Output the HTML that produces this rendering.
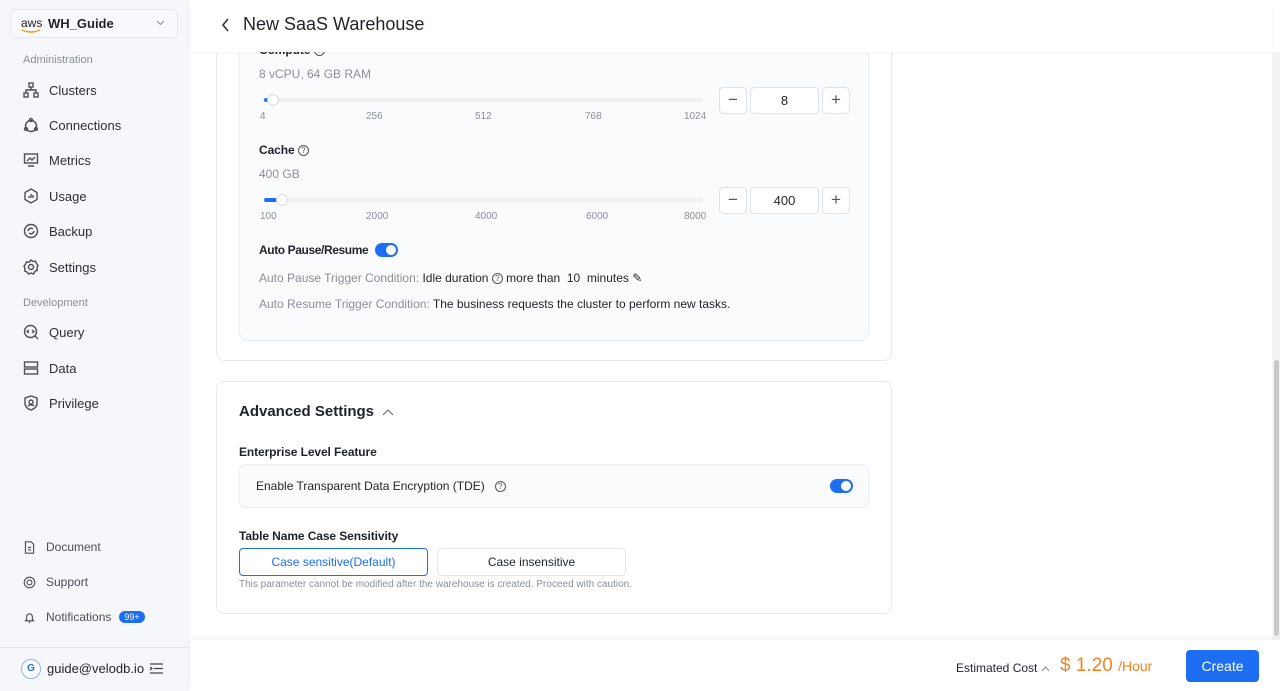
<!DOCTYPE html>
<html><head><meta charset="utf-8"><style>
*{box-sizing:border-box;margin:0;padding:0}
body{width:1280px;height:691px;overflow:hidden;font-family:"Liberation Sans",sans-serif;background:#fff;position:relative;color:#1f2329}
.side{position:absolute;left:0;top:0;width:190px;height:691px;background:#f6f7fb}
.ws{position:absolute;left:10px;top:9px;width:168px;height:29px;border:1px solid #e6e8ef;border-radius:5px;background:#f8f9fc}
.ws .aws{position:absolute;left:10px;top:6px;font-size:12px;color:#222}
.ws .n{position:absolute;left:37px;top:6px;font-size:13px;font-weight:bold;color:#1f2329}
.sec{position:absolute;left:23px;font-size:11px;color:#8a8f99}
.it{position:absolute;left:23px;font-size:13px;color:#2b2f36;display:flex;align-items:center}
.it svg{width:16px;height:16px;margin-right:10px;stroke:#4a4f58;fill:none;stroke-width:1.4}
.bt{position:absolute;left:23px;font-size:12px;color:#4a4f58;display:flex;align-items:center}
.bt svg{width:13px;height:13px;margin-right:10px;stroke:#4a4f58;fill:none;stroke-width:1.4}
.badge{background:#1e6ef4;color:#fff;font-size:9px;border-radius:8px;padding:1px 5px;margin-left:8px}
.hdr{position:absolute;left:190px;top:0;width:1082px;height:52px;background:#fff;box-shadow:0 1px 2px rgba(0,0,0,.04)}
.hdr .t{position:absolute;left:53px;top:14px;font-size:18px;color:#1f2329}
.card{position:absolute;left:216px;width:676px;border:1px solid #e8eaee;border-radius:8px;background:#fff}
.inner{position:absolute;left:239px;top:40px;width:630px;height:301px;border:1px solid #eceef2;border-top:none;border-radius:0 0 8px 8px;background:#fafbfd}
.abs{position:absolute}
.gray{color:#8a8f99}
.track{position:absolute;height:4px;background:#eef0f4;border-radius:2px}
.knob{position:absolute;width:12px;height:12px;border-radius:50%;background:#fff;border:1px solid #d9dce3;top:-4px}
.tick{position:absolute;font-size:10px;color:#8a8f99}
.btn{position:absolute;width:28px;height:27px;border:1px solid #dfe2e8;border-radius:4px;background:#fff;text-align:center;line-height:24px;font-size:17px;color:#555}
.inp{position:absolute;width:69px;height:27px;border:1px solid #dfe2e8;border-radius:4px;background:#fff;text-align:center;line-height:26px;font-size:13px}
.tg{position:absolute;width:23px;height:14px;border-radius:7px;background:#1e6ef4}
.tg:after{content:"";position:absolute;right:2px;top:2px;width:10px;height:10px;border-radius:50%;background:#fff}
.q{display:inline-block;width:11px;height:11px;border:1px solid #555;border-radius:50%;font-size:8px;text-align:center;line-height:10px;vertical-align:1px;color:#555;font-weight:normal}
.foot{position:absolute;left:190px;top:640px;width:1090px;height:51px;background:#fff;box-shadow:0 -2px 6px rgba(0,0,0,.04)}
.m{font-weight:bold;font-size:12px;letter-spacing:-0.1px}
</style></head><body>
<div class="side">
<div class="ws"><span class="aws">aws</span><svg style="position:absolute;left:10px;top:19px" width="20" height="5"><path d="M1 1 Q10 5 19 1" stroke="#f90" stroke-width="1.5" fill="none"/></svg><span class="n">WH_Guide</span><svg style="position:absolute;right:12px;top:10px" width="9" height="6"><path d="M1 1l3.5 3.5L8 1" stroke="#888" fill="none"/></svg></div>
<div class="sec" style="top:54px">Administration</div>
<div class="it" style="top:82px"><svg viewBox="0 0 16 16"><rect x="6" y="1" width="4" height="4"/><rect x="1" y="11" width="4" height="4"/><rect x="11" y="11" width="4" height="4"/><path d="M8 5v3M3 11V8h10v3"/></svg>Clusters</div>
<div class="it" style="top:117px"><svg viewBox="0 0 16 16"><circle cx="8" cy="9" r="5.5"/><circle cx="8" cy="3" r="1.5"/><circle cx="3" cy="12" r="1.5"/><circle cx="13" cy="12" r="1.5"/></svg>Connections</div>
<div class="it" style="top:152px"><svg viewBox="0 0 16 16"><rect x="1.5" y="2" width="13" height="9"/><path d="M4 9l3-3 2 2 3-3M5 14h6"/></svg>Metrics</div>
<div class="it" style="top:188px"><svg viewBox="0 0 16 16"><path d="M8 1l6 3.5v7L8 15l-6-3.5v-7z M6 10V8M8 10V6M10 10V7"/></svg>Usage</div>
<div class="it" style="top:223px"><svg viewBox="0 0 16 16"><circle cx="8" cy="8" r="6.5"/><path d="M5 8a3 3 0 0 1 5-2M11 8a3 3 0 0 1-5 2"/></svg>Backup</div>
<div class="it" style="top:259px"><svg viewBox="0 0 16 16"><path d="M8 1l2 1.5 2.5-.3 1 2.3 1.5 2-1 2.3.3 2.5-2.3 1L10.5 15 8 14l-2.5 1-1.5-2-2.3-1 .3-2.5-1-2.3 1.5-2 1-2.3 2.5.3z"/><circle cx="8" cy="8" r="2.5"/></svg>Settings</div>
<div class="sec" style="top:297px">Development</div>
<div class="it" style="top:324px"><svg viewBox="0 0 16 16"><circle cx="7.5" cy="7.5" r="6"/><path d="M12 12l3 3M6 6l-2 1.5L6 9M9 6l2 1.5L9 9"/></svg>Query</div>
<div class="it" style="top:360px"><svg viewBox="0 0 16 16"><rect x="1.5" y="2" width="13" height="5"/><rect x="1.5" y="9" width="13" height="5"/></svg>Data</div>
<div class="it" style="top:395px"><svg viewBox="0 0 16 16"><path d="M8 1l6 2v5c0 4-3 6-6 7-3-1-6-3-6-7V3z"/><circle cx="8" cy="7" r="2"/><path d="M5 11c1-1.5 5-1.5 6 0"/></svg>Privilege</div>
<div class="bt" style="top:540px"><svg viewBox="0 0 16 16"><path d="M3 1h7l3 3v11H3z M6 8h4M6 11h4"/></svg>Document</div>
<div class="bt" style="top:575px"><svg viewBox="0 0 16 16"><circle cx="8" cy="8" r="6.5"/><circle cx="8" cy="8" r="3"/></svg>Support</div>
<div class="bt" style="top:610px"><svg viewBox="0 0 16 16"><path d="M3 12h10l-1.5-2V7a3.5 3.5 0 0 0-7 0v3zM7 14h2"/></svg>Notifications<span class="badge">99+</span></div>
<div style="position:absolute;left:0;top:647px;width:190px;border-top:1px solid #e4e6ec"></div>
<div style="position:absolute;left:21px;top:659px;width:20px;height:20px;border:1px solid #8fb3f7;border-radius:50%;background:#fff;font-size:10px;color:#1e6ef4;text-align:center;line-height:18px;font-weight:bold">G</div>
<div style="position:absolute;left:47px;top:661px;font-size:13px;color:#1f2329">guide@velodb.io</div>
<svg style="position:absolute;left:150px;top:663px" width="13" height="11"><path d="M0 1h13M4 5.5h9M0 10h13M0 4l2 1.5L0 7" stroke="#444" stroke-width="1.3" fill="none"/></svg>
</div>

<div class="card" style="top:20px;height:341px;border-top:none;border-radius:0 0 8px 8px"></div>
<div class="inner"></div>
<div class="abs m" style="left:259px;top:43px">Compute <span class="q">?</span></div>
<div class="abs gray" style="left:259px;top:67px;font-size:12px">8 vCPU, 64 GB RAM</div>
<div class="track" style="left:264px;top:98px;width:439px"><div style="position:absolute;left:0;top:0;width:4px;height:4px;background:#1e6ef4;border-radius:2px"></div><div class="knob" style="left:3px"></div></div>
<div class="tick" style="left:260px;top:111px">4</div><div class="tick" style="left:366px;top:111px">256</div><div class="tick" style="left:475px;top:111px">512</div><div class="tick" style="left:585px;top:111px">768</div><div class="tick" style="left:684px;top:111px">1024</div>
<div class="btn" style="left:719px;top:87px">−</div><div class="inp" style="left:750px;top:87px">8</div><div class="btn" style="left:822px;top:87px">+</div>
<div class="abs m" style="left:259px;top:143px">Cache <span class="q">?</span></div>
<div class="abs gray" style="left:259px;top:167px;font-size:12px">400 GB</div>
<div class="track" style="left:264px;top:198px;width:439px"><div style="position:absolute;left:0;top:0;width:14px;height:4px;background:#1e6ef4;border-radius:2px"></div><div class="knob" style="left:12px"></div></div>
<div class="tick" style="left:260px;top:211px">100</div><div class="tick" style="left:366px;top:211px">2000</div><div class="tick" style="left:475px;top:211px">4000</div><div class="tick" style="left:586px;top:211px">6000</div><div class="tick" style="left:684px;top:211px">8000</div>
<div class="btn" style="left:719px;top:187px">−</div><div class="inp" style="left:750px;top:187px">400</div><div class="btn" style="left:822px;top:187px">+</div>
<div class="abs m" style="left:259px;top:243px;letter-spacing:-0.4px">Auto Pause/Resume</div>
<div class="tg" style="left:375px;top:243px"></div>
<div class="abs" style="left:259px;top:271px;font-size:12px"><span class="gray">Auto Pause Trigger Condition: </span>Idle duration <span class="q">?</span> more than&nbsp; 10&nbsp; minutes ✎</div>
<div class="abs" style="left:259px;top:297px;font-size:12px"><span class="gray">Auto Resume Trigger Condition: </span>The business requests the cluster to perform new tasks.</div>

<div class="card" style="top:381px;height:233px"></div>
<div class="abs" style="left:239px;top:403px;font-size:15px;font-weight:bold">Advanced Settings <svg width="12" height="8" style="margin-left:4px"><path d="M1 7l5-5 5 5" stroke="#666" fill="none"/></svg></div>
<div class="abs m" style="left:239px;top:445px">Enterprise Level Feature</div>
<div class="abs" style="left:239px;top:464px;width:630px;height:44px;border:1px solid #eceef2;border-radius:6px;background:#fafbfd"></div>
<div class="abs" style="left:256px;top:479px;font-size:12px">Enable Transparent Data Encryption (TDE) &nbsp; <span class="q">?</span></div>
<div class="tg" style="left:830px;top:479px"></div>
<div class="abs m" style="left:239px;top:529px">Table Name Case Sensitivity</div>
<div class="abs" style="left:239px;top:548px;width:189px;height:28px;border:1px solid #1e6ef4;border-radius:4px;color:#1e6ef4;font-size:12px;text-align:center;line-height:26px">Case sensitive(Default)</div>
<div class="abs" style="left:437px;top:548px;width:189px;height:28px;border:1px solid #e2e4ea;border-radius:4px;font-size:12px;text-align:center;line-height:26px">Case insensitive</div>
<div class="abs gray" style="left:239px;top:579px;font-size:10px">This parameter cannot be modified after the warehouse is created. Proceed with caution.</div>

<div class="hdr"><svg style="position:absolute;left:31px;top:18px" width="9" height="14"><path d="M7 1L2 7l5 6" stroke="#333" stroke-width="1.6" fill="none"/></svg><div class="t">New SaaS Warehouse</div></div>
<div class="abs" style="left:1272px;top:52px;width:8px;height:588px;background:#f3f3f3"></div>
<div class="abs" style="left:1274px;top:360px;width:5px;height:276px;background:#c8c8c8;border-radius:3px"></div>
<div class="foot">
<div class="abs" style="left:766px;top:21px;font-size:12px;color:#1f2329">Estimated Cost <svg width="9" height="6"><path d="M1 5l3.5-4L8 5" stroke="#888" fill="none"/></svg></div>
<div class="abs" style="left:870px;top:15px;font-size:19px;color:#f5821f">$ 1.20 <span style="font-size:14px">/Hour</span></div>
<div class="abs" style="left:996px;top:10px;width:73px;height:32px;background:#1e6ef4;border-radius:4px;color:#fff;font-size:14px;text-align:center;line-height:32px">Create</div>
</div>
</body></html>
